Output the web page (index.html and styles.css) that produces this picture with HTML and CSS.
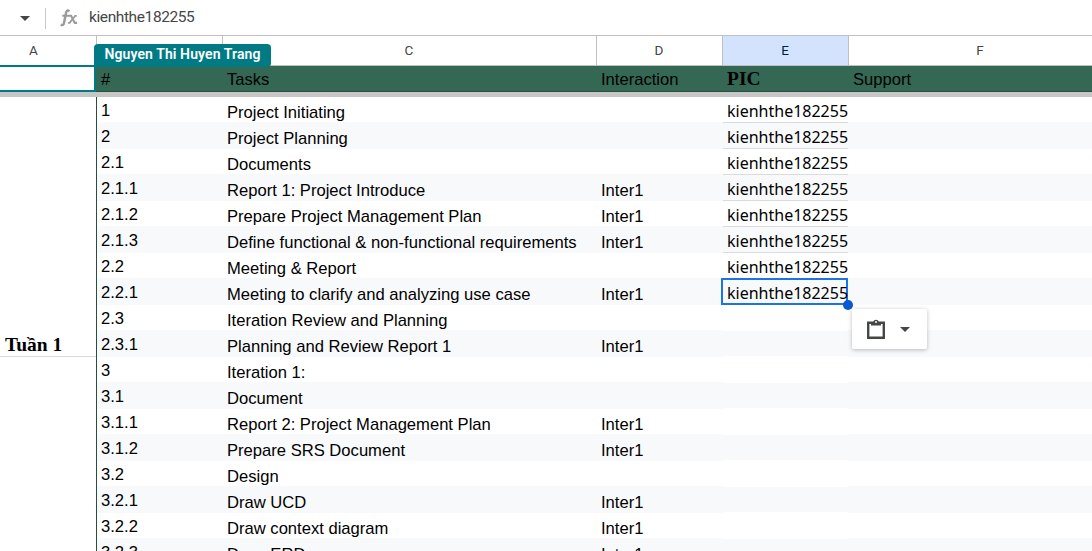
FILE: index.html
```html
<!DOCTYPE html>
<html lang="vi">
<head>
<meta charset="utf-8">
<title>Tasks</title>
<link rel="stylesheet" href="styles.css">
</head>
<body>
<div class="sheet">
<header class="formula-bar">
<svg class="caret" width="10" height="5" viewBox="0 0 10 5"><path d="M0 0h10L5 5z" fill="#444746"/></svg>
<span class="divider"></span>
<svg class="fx" width="18" height="18" viewBox="0 0 18 18" fill="none" stroke="#999b9c"><path d="M9.5 2.2C7.2.8 6.3 2 5.9 4.5L4.1 13.6C3.7 16 2.4 16.6.8 15.6" stroke-width="2.5"/><path d="M2.3 6.8h6.5M8.8 6.8h2.3l3.7 7.1h2.3" stroke-width="2.1"/><path d="M16.8 6.8h-1.6l-5.6 7.1H7.9" stroke-width="1.8"/></svg>
<span class="formula">kienhthe182255</span>
</header>
<div class="cols letters">
<span class="letter">A</span><span class="letter"></span><span class="letter">C</span><span class="letter">D</span><span class="letter active">E</span><span class="letter last">F</span>
</div>
<div class="cols head">
<span class="peer"><b class="tag">Nguyen Thi Huyen Trang</b></span><span class="th">#</span><span class="th">Tasks</span><span class="th">Interaction</span><b class="th pic">PIC</b><span class="th">Support</span>
</div>
<div class="freeze"></div>
<main class="body">
<aside class="week"><b class="week-name">Tuần 1</b></aside>
<div class="rows">
<div class="row"><span class="n">1</span><span class="t">Project Initiating</span><span class="t"></span><span class="p line">kienhthe182255</span></div>
<div class="row"><span class="n">2</span><span class="t">Project Planning</span><span class="t"></span><span class="p line">kienhthe182255</span></div>
<div class="row"><span class="n">2.1</span><span class="t">Documents</span><span class="t"></span><span class="p line">kienhthe182255</span></div>
<div class="row"><span class="n">2.1.1</span><span class="t">Report 1: Project Introduce</span><span class="t">Inter1</span><span class="p line">kienhthe182255</span></div>
<div class="row"><span class="n">2.1.2</span><span class="t">Prepare Project Management Plan</span><span class="t">Inter1</span><span class="p line">kienhthe182255</span></div>
<div class="row"><span class="n">2.1.3</span><span class="t">Define functional &amp; non-functional requirements</span><span class="t">Inter1</span><span class="p line">kienhthe182255</span></div>
<div class="row"><span class="n">2.2</span><span class="t">Meeting &amp; Report</span><span class="t"></span><span class="p">kienhthe182255</span></div>
<div class="row"><span class="n">2.2.1</span><span class="t">Meeting to clarify and analyzing use case</span><span class="t">Inter1</span><span class="p selected">kienhthe182255<i class="handle"></i><span class="paste"><svg width="18" height="20" viewBox="0 0 18 20"><path d="M1.2 3.7h15.6v15H1.2z" fill="none" stroke="#444746" stroke-width="2.4"/><path d="M4 3h2.2a2.9 2.9 0 0 1 5.6 0H14v3.5H4z" fill="#444746"/><circle cx="9" cy="3" r="1" fill="#fff"/></svg><svg width="10" height="5" viewBox="0 0 10 5"><path d="M0 0h10L5 5z" fill="#444746"/></svg></span></span></div>
<div class="row"><span class="n">2.3</span><span class="t">Iteration Review and Planning</span><span class="t"></span><span class="p"></span></div>
<div class="row"><span class="n">2.3.1</span><span class="t">Planning and Review Report 1</span><span class="t">Inter1</span><span class="p blank"></span></div>
<div class="row"><span class="n">3</span><span class="t">Iteration 1:</span><span class="t"></span><span class="p"></span></div>
<div class="row"><span class="n">3.1</span><span class="t">Document</span><span class="t"></span><span class="p blank"></span></div>
<div class="row"><span class="n">3.1.1</span><span class="t">Report 2: Project Management Plan</span><span class="t">Inter1</span><span class="p"></span></div>
<div class="row"><span class="n">3.1.2</span><span class="t">Prepare SRS Document</span><span class="t">Inter1</span><span class="p blank"></span></div>
<div class="row"><span class="n">3.2</span><span class="t">Design</span><span class="t"></span><span class="p"></span></div>
<div class="row"><span class="n">3.2.1</span><span class="t">Draw UCD</span><span class="t">Inter1</span><span class="p blank"></span></div>
<div class="row"><span class="n">3.2.2</span><span class="t">Draw context diagram</span><span class="t">Inter1</span><span class="p"></span></div>
<div class="row"><span class="n">3.2.3</span><span class="t">Draw ERD</span><span class="t">Inter1</span><span class="p blank"></span></div>
</div>
</main>
</div>
</body>
</html>
```

FILE: styles.css
```css
* { box-sizing: border-box; }
body { margin: 0; background: #fff; color: #000; font: 16.6px/18px "Liberation Sans", Arial, sans-serif; }
.sheet { width: 1092px; height: 551px; overflow: hidden; }
.formula-bar { display: flex; align-items: center; height: 36px; padding: 1px 0 0 20px; border-bottom: 1px solid #c0c0c0; }
.divider { width: 1px; height: 21px; margin: 0 14px 0 15px; background: #c7c7c7; }
.formula { margin-left: 11px; padding-bottom: 2px; font: 15.5px/20px Roboto, sans-serif; letter-spacing: -0.4px; color: #444746; }
.cols { display: grid; grid-template-columns: 97px 126px 374px 126px 126px 1fr; }
.letters { height: 30px; border-bottom: 1px solid #c0c0c0; }
.letter { padding-right: 1px; border-right: 1px solid #c0c0c0; text-align: center; font: 13.5px/29px Roboto, sans-serif; color: #444746; }
.letter:first-child { padding-right: 29px; }
.letter.active { background: #d3e3fd; color: #041e49; }
.letter.last { padding-left: 20px; border: 0; }
.head { height: 26px; background: #356854; border-bottom: 1px solid #284e3f; }
.peer { position: relative; height: 27px; margin-top: -1px; background: #fff; border: solid #007b83; border-width: 2px 2px 2px 0; width: 96px; }
.tag { position: absolute; left: 94px; top: -23px; width: 177px; height: 23px; border-radius: 4px 4px 4px 0; background: #007b83; color: #fff; font: 600 14px/21px Roboto, sans-serif; letter-spacing: 0.1px; text-align: center; white-space: nowrap; }
.th { padding: 5px 0 0 4px; color: #000; }
.pic { font: bold 19.5px/18px "Liberation Serif", serif; padding-top: 4px; }
.freeze { height: 5px; background: #c6c6c6; }
.body { display: flex; height: 454px; }
.week { display: flex; align-items: flex-end; width: 96px; height: 260px; padding: 0 0 1px 5px; border-bottom: 1px solid #d9d9d9; }
.week-name { font: bold 19.5px/20px "Liberation Serif", serif; }
.rows { flex: 1; height: 454px; border-left: 1px solid #284e3f; }
.row { display: grid; grid-template-columns: 126px 374px 126px 125px 1fr; height: 25px; white-space: nowrap; }
.row:nth-child(even) { height: 27px; background: #f8f9fb; }
.n { padding: 5px 0 0 4px; }
.t { padding: 7px 0 0 4px; }
.row:nth-child(even) .n { padding-top: 6px; }
.row:nth-child(even) .t { padding-top: 8px; }
.p { position: relative; padding: 4px 0 0 4px; font: 16px/20px "Noto Sans", sans-serif; }
.row:nth-child(even) .p { padding-top: 5px; }
.line { box-shadow: 0 1px #d9dbdd; }
.row:nth-child(even) .line { box-shadow: inset 0 -1px #d9dbdd; }
.blank { border: solid #fff; border-width: 1px 0; }
.row .selected { margin-left: -2px; width: 127px; border: 2px solid #1a73e8; }
.row:nth-child(even) .selected { padding: 3px 0 0 4px; }
.handle { position: absolute; left: 120px; top: 20px; width: 10px; height: 10px; border-radius: 50%; background: #0b57d0; }
.paste { position: absolute; left: 129px; top: 29px; width: 75px; height: 40px; display: flex; align-items: center; gap: 15px; padding-left: 15px; background: #fff; border-radius: 2px; box-shadow: 0 1px 4px rgba(60,64,67,.35); z-index: 1; }
```
